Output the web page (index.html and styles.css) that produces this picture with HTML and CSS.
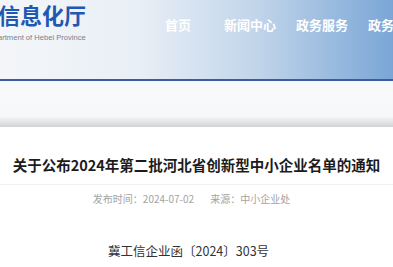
FILE: index.html
```html
<!DOCTYPE html>
<html lang="zh-CN">

<head>
    <meta charset="UTF-8">
    <meta name="viewport" content="width=device-width, initial-scale=1.0">
    <title>关于公布2024年第二批河北省创新型中小企业名单的通知</title>
    <link rel="stylesheet" href="styles.css">
</head>

<body>
    <header class="topBar">
        <div class="logo">
            <div class="logoName">信息化厅</div>
            <div class="logoSub">artment of Hebei Province</div>
        </div>
        <nav class="mainNav">
            <a class="navItem" href="#">首页</a>
            <a class="navItem" href="#">新闻中心</a>
            <a class="navItem" href="#">政务服务</a>
            <a class="navItem" href="#">政务公开</a>
        </nav>
    </header>
    <div class="blueLine"></div>
    <div class="crumbBand"></div>

    <main class="article">
        <h1 class="articleTitle">关于公布2024年第二批河北省创新型中小企业名单的通知</h1>
        <div class="articleMeta">
            <span>发布时间：2024-07-02</span>
            <span>来源：中小企业处</span>
        </div>
        <p class="docNumber">冀工信企业函〔2024〕303号</p>
    </main>
</body>

</html>
```

FILE: styles.css
```css
html {
    margin: 0;
    background-color: #ffffff;
}

body {
    margin: 0;
    overflow: hidden;
    font-family: "Noto Sans CJK SC", "Noto Sans", sans-serif;
    color: #222222;
}

.topBar {
    height: 79px;
    display: flex;
    flex-direction: row;
    align-items: flex-start;
    background: linear-gradient(to right, #f4f6f9 0%, #e9eff6 35%, #c0d4ea 66%, #7aa6d6 100%);
    overflow: hidden;
}

.logo {
    width: 144px;
    flex-shrink: 0;
    margin-left: -2px;
}

.logoName {
    margin-top: -1px;
    font-size: 22px;
    line-height: 30px;
    font-weight: bold;
    color: #1f58b3;
    white-space: nowrap;
}

.logoSub {
    margin-top: 4px;
    font-family: "Liberation Sans", Arial, sans-serif;
    font-size: 7.6px;
    line-height: 10px;
    color: #7a8089;
    white-space: nowrap;
}

.mainNav {
    display: flex;
    flex-direction: row;
    margin-top: 15px;
}

.navItem {
    width: 72px;
    flex-shrink: 0;
    text-align: center;
    font-size: 13px;
    line-height: 20px;
    font-weight: bold;
    color: #ffffff;
    text-decoration: none;
    white-space: nowrap;
}

.blueLine {
    height: 2px;
    background-color: #3b5c9e;
}

.crumbBand {
    height: 46px;
    background: linear-gradient(to bottom, #f8f9fb 0px, #f7f8fa 35px, #d3d3d5 46px);
}

.article {
    padding-top: 28px;
}

.articleTitle {
    margin: 0;
    padding-bottom: 9px;
    border-bottom: 1px solid #f1f1f1;
    text-align: center;
    font-size: 14.5px;
    line-height: 20px;
    font-weight: bold;
    color: #1c1c1c;
    white-space: nowrap;
}

.articleMeta {
    display: flex;
    flex-direction: row;
    justify-content: center;
    gap: 16px;
    margin-top: 7px;
    padding-right: 10px;
    font-size: 10px;
    line-height: 14px;
    color: #a3a3a3;
}

.docNumber {
    margin: 36px 0 0 0;
    padding-left: 108px;
    font-size: 12.5px;
    line-height: 18px;
    color: #333333;
}
```
